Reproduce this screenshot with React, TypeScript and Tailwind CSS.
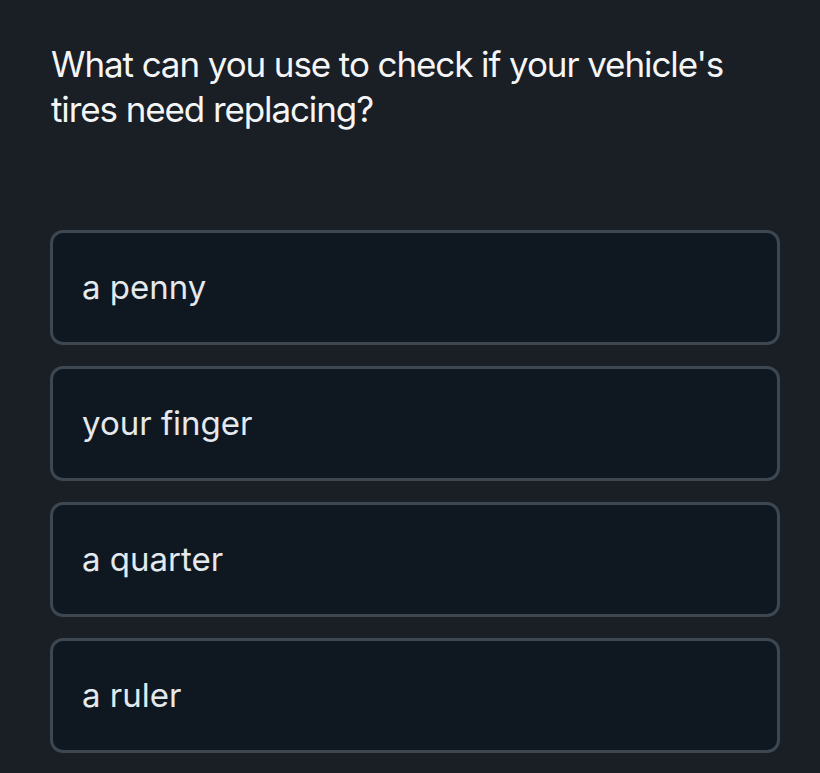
export default function App() {
  const options = ["a penny", "your finger", "a quarter", "a ruler"];

  return (
    <div
      className="min-h-screen w-full bg-[#1a1e25] pb-8"
      style={{ fontFamily: "Inter, 'Noto Sans', sans-serif" }}
    >
      <h1 className="pl-[51px] pr-[40px] pt-[42px] text-[35px] leading-[45px] font-normal text-[#f4f5f6] tracking-[-1.1px]">
        What can you use to check if your vehicle's tires need replacing?
      </h1>

      <div className="mt-[98px] ml-[50px] mr-[40px] flex flex-col gap-[21px]">
        {options.map((opt) => (
          <div
            key={opt}
            className="h-[115px] flex items-center rounded-[13px] border-[3px] border-[#3c4752] bg-[#0f1821] pl-[29px]"
          >
            <span className="text-[33px] text-[#e4e9ed]">{opt}</span>
          </div>
        ))}
      </div>
    </div>
  );
}
